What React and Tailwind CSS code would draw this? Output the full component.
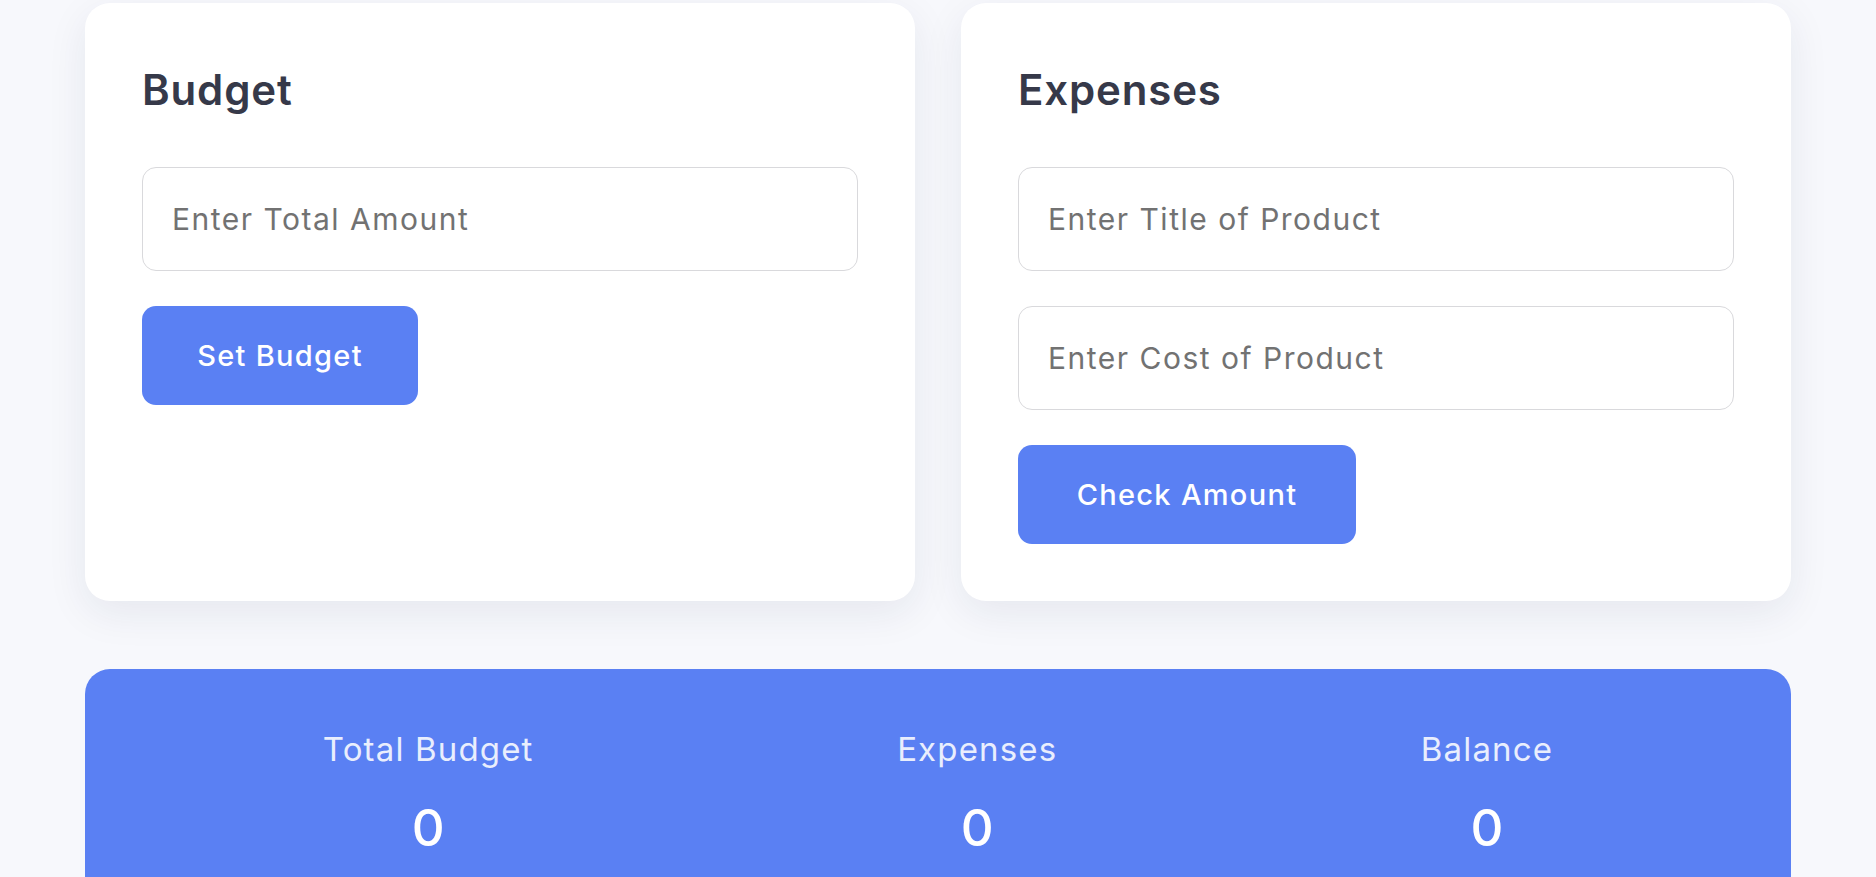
import React, { useState } from "react";

const font = { fontFamily: "Inter, 'Noto Sans', sans-serif" };

function Field({ placeholder, value, onChange }) {
  return (
    <input
      type="text"
      placeholder={placeholder}
      value={value}
      onChange={(e) => onChange(e.target.value)}
      className="w-full h-[104px] rounded-[14px] border border-[#d9d9dc] bg-white pl-[29px] pr-4 text-[30px] tracking-[0.05em] text-[#3a3a3a] placeholder:text-[#727272] outline-none"
    />
  );
}

function Card({ title, children }) {
  return (
    <div className="bg-white rounded-[25px] px-[57px] pt-[61px] pb-[57px] shadow-[0_12px_40px_rgba(30,40,80,0.08)]">
      <h2 className="text-[42px] leading-[51px] font-semibold tracking-[0.02em] text-[#363949] mb-[52px]">
        {title}
      </h2>
      <div className="flex flex-col gap-[35px] items-start">{children}</div>
    </div>
  );
}

function Stat({ label, value }) {
  return (
    <div className="flex flex-col items-center">
      <p className="text-[33px] leading-[40px] tracking-[0.035em] text-[#e9eefd]">{label}</p>
      <p className="text-[51px] leading-[60px] font-medium text-white mt-[29px]">
        {value}
      </p>
    </div>
  );
}

export default function App() {
  const [budget, setBudget] = useState(0);
  const [expenses, setExpenses] = useState(0);
  const [amount, setAmount] = useState("");
  const [title, setTitle] = useState("");
  const [cost, setCost] = useState("");

  const handleBudget = () => {
    const n = Number(amount);
    if (!isNaN(n)) setBudget(n);
    setAmount("");
  };

  const handleExpense = () => {
    const n = Number(cost);
    if (!isNaN(n)) setExpenses(expenses + n);
    setTitle("");
    setCost("");
  };

  return (
    <div className="min-h-screen bg-[#f7f8fc] pt-[3px] pb-10" style={font}>
      <div className="w-[1706px] mx-auto">
        <div className="grid grid-cols-2 gap-[46px]">
          <Card title="Budget">
            <Field placeholder="Enter Total Amount" value={amount} onChange={setAmount} />
            <button
              onClick={handleBudget}
              className="h-[99px] w-[276px] rounded-[14px] bg-[#5a80f3] text-white text-[29px] tracking-[0.045em] font-medium"
            >
              Set Budget
            </button>
          </Card>

          <Card title="Expenses">
            <Field placeholder="Enter Title of Product" value={title} onChange={setTitle} />
            <Field placeholder="Enter Cost of Product" value={cost} onChange={setCost} />
            <button
              onClick={handleExpense}
              className="h-[99px] w-[338px] rounded-[14px] bg-[#5a80f3] text-white text-[29px] tracking-[0.045em] font-medium"
            >
              Check Amount
            </button>
          </Card>
        </div>

        {/* totals */}
        <div className="mt-[68px] bg-[#5a80f3] rounded-[25px] px-[56px] pt-[60px] pb-[60px] flex justify-around">
          <Stat label="Total Budget" value={budget} />
          <Stat label="Expenses" value={expenses} />
          <Stat label="Balance" value={budget - expenses} />
        </div>
      </div>
    </div>
  );
}
